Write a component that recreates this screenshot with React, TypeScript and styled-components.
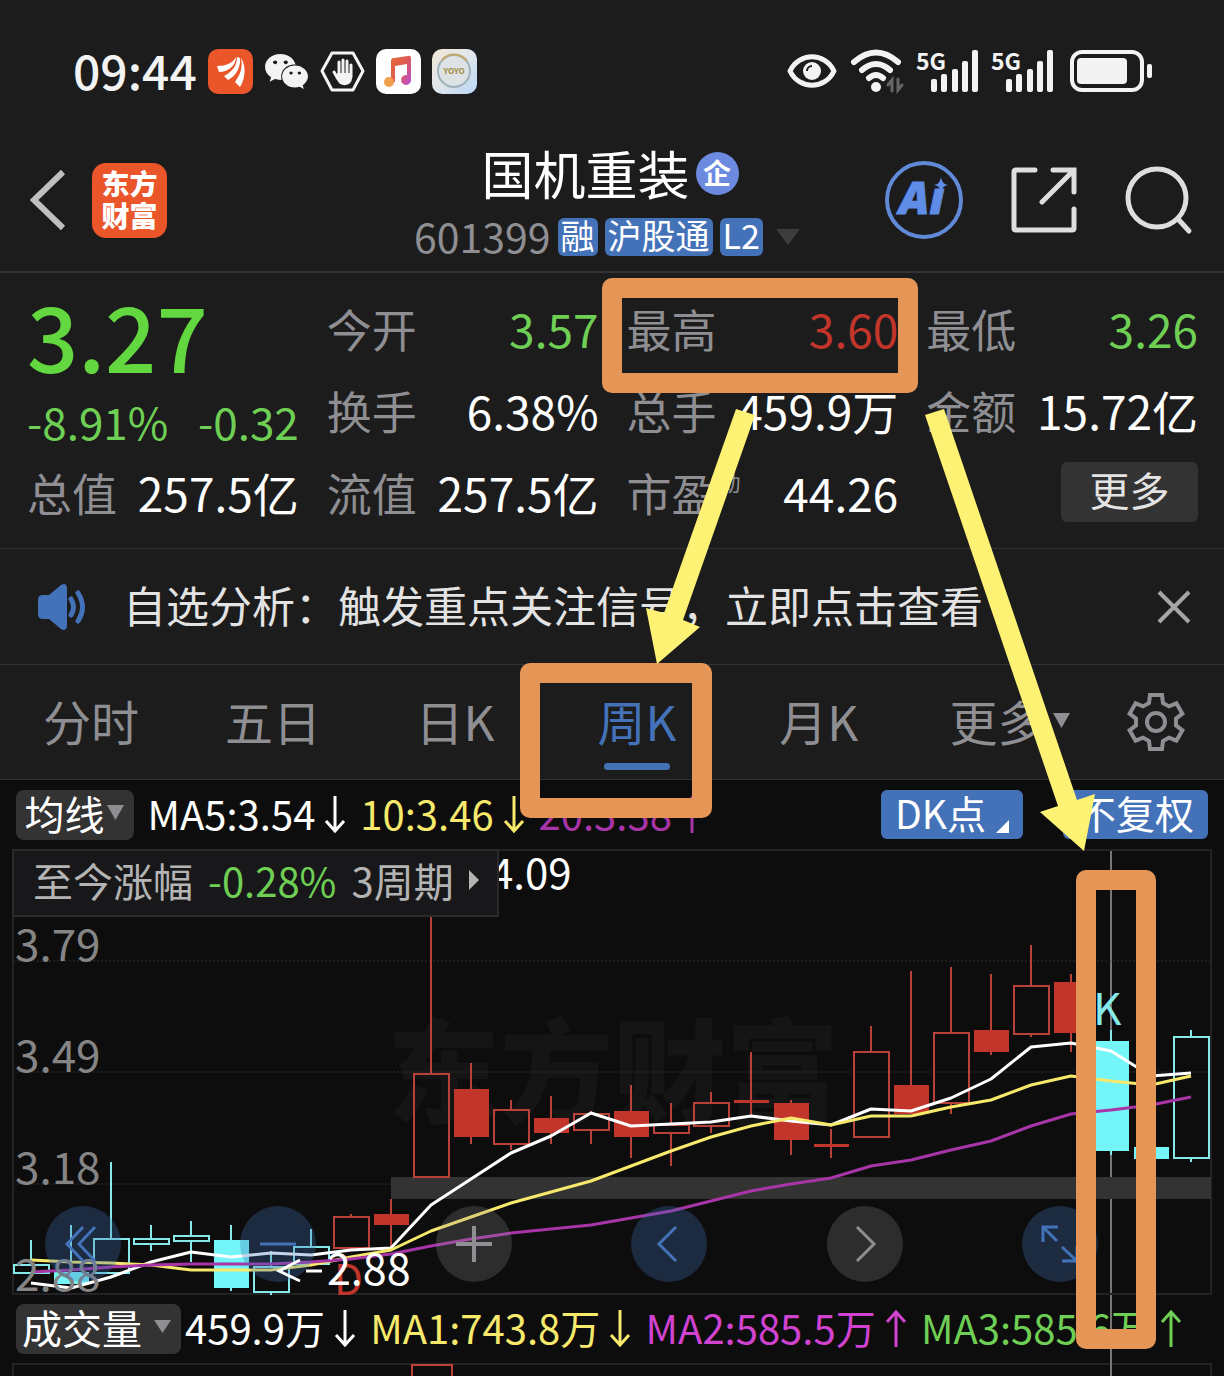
import React from 'react';
import styled, { createGlobalStyle } from 'styled-components';
import { FaWeixin } from 'react-icons/fa';

const c = {
  bg: '#1c1c1c',
  chart: '#0d0d0d',
  line: '#323234',
  grey: '#8e8e93',
  blue: '#4472b9',
  green: '#6fcf55',
  red: '#c2352b',
  redLine: '#b8423a',
  cyan: '#74f5f7',
  cyanLine: '#86eaea',
  yellow: '#f7e96b',
  purple: '#a835a8',
  magenta: '#d043d0',
};
const font = '"Noto Sans CJK SC", "Noto Sans", sans-serif';

const Global = createGlobalStyle`
  * { box-sizing: border-box; }
  body { margin: 0; background: ${c.bg}; }
  button { font: inherit; color: inherit; background: none; border: 0; padding: 0; cursor: pointer; }
  svg { display: block; flex: none; overflow: visible; }
`;

const Page = styled.div`
  position: relative;
  display: flex;
  flex-direction: column;
  min-height: 100vh;
  overflow: hidden;
  background: ${c.bg};
  color: #fff;
  font-family: ${font};
  font-weight: 400;
  line-height: 1;
  white-space: nowrap;
`;

/* ---------- status bar ---------- */
const StatusBar = styled.div`
  display: flex;
  justify-content: space-between;
  align-items: center;
  height: 142px;
  padding: 0 71px 0 73px;
`;
const Group = styled.div<{ $gap: number }>`
  display: flex;
  align-items: center;
  gap: ${(p) => p.$gap}px;
`;
const Clock = styled.time`
  padding-bottom: 4px;
  font-size: 48px;
  font-weight: 500;
  color: #f3f3f3;
`;
const AppTile = styled.div<{ $bg: string }>`
  display: flex;
  align-items: center;
  justify-content: center;
  width: 45px;
  height: 45px;
  border-radius: 10px;
  background: ${(p) => p.$bg};
  color: #f3f3f3;
`;

/* ---------- header ---------- */
const Header = styled.header`
  display: grid;
  grid-template-columns: 1fr auto 1fr;
  align-items: center;
  height: 131px;
  padding: 0 32px 28px 28px;
  border-bottom: 2px solid ${c.line};
`;
const BrandLogo = styled.div`
  width: 75px;
  height: 75px;
  padding: 4px 0;
  border-radius: 14px;
  background: #ea5529;
  font-size: 28px;
  line-height: 32px;
  font-weight: 900;
  text-align: center;
`;
const TitleBlock = styled.div`
  display: flex;
  flex-direction: column;
  align-items: center;
  gap: 16px;
  padding-top: 5px;
`;
const Title = styled.h1`
  display: flex;
  align-items: center;
  gap: 6px;
  margin: 0;
  font-size: 52px;
  font-weight: 400;
`;
const CorpBadge = styled.span`
  display: flex;
  align-items: center;
  justify-content: center;
  width: 43px;
  height: 43px;
  padding-bottom: 2px;
  border-radius: 50%;
  background: #6c8be0;
  font-size: 28px;
  font-weight: 700;
`;
const CodeRow = styled.div`
  display: flex;
  align-items: center;
  gap: 7px;
`;
const Code = styled.span`
  padding-bottom: 2px;
  font-size: 41px;
  color: ${c.grey};
`;
const Tag = styled.span`
  height: 38px;
  padding: 0 3px;
  border-radius: 6px;
  background: ${c.blue};
  font-size: 34px;
  line-height: 34px;
`;
const CodeMenu = styled.button`
  padding: 0 6px;
`;
const Actions = styled.div`
  display: flex;
  align-items: center;
  justify-content: flex-end;
  gap: 47px;
`;

/* ---------- quote ---------- */
const Quote = styled.section`
  display: grid;
  grid-template-columns: repeat(4, 1fr);
  grid-auto-rows: 82px;
  column-gap: 28px;
  padding: 14px 26px 15px 27px;
  border-bottom: 1px solid ${c.line};
`;
const PriceCell = styled.div`
  grid-row: span 2;
  display: flex;
  flex-direction: column;
  gap: 18px;
`;
const Price = styled.strong`
  font-size: 90px;
  line-height: 94px;
  font-weight: 500;
  color: #63d740;
`;
const Change = styled.div`
  display: flex;
  justify-content: space-between;
  font-size: 44px;
  color: ${c.green};
`;
const Stat = styled.div`
  display: flex;
  align-items: center;
  justify-content: space-between;
`;
const StatLabel = styled.span`
  display: flex;
  font-size: 45px;
  color: ${c.grey};
`;
const Sup = styled.sup`
  margin-left: 2px;
  font-size: 22px;
  line-height: 22px;
`;
const StatValue = styled.span<{ $color?: string }>`
  font-size: 46px;
  color: ${(p) => p.$color || '#fff'};
`;
const MoreButton = styled.button`
  justify-self: end;
  align-self: center;
  width: 137px;
  height: 60px;
  padding-bottom: 6px;
  border-radius: 6px;
  background: #333;
  color: #e4e4e4;
  font-size: 40px;
`;

/* ---------- notice ---------- */
const Notice = styled.section`
  display: flex;
  align-items: center;
  height: 116px;
  padding: 0 34px 0 36px;
  border-bottom: 1px solid ${c.line};
`;
const NoticeText = styled.p`
  flex: 1;
  margin: 0 0 0 36px;
  padding-bottom: 4px;
  font-size: 43px;
  color: #e3e3e3;
`;

/* ---------- tabs ---------- */
const Tabs = styled.nav`
  display: flex;
  align-items: center;
  height: 115px;
  padding-right: 22px;
  border-bottom: 1px solid ${c.line};
`;
const Tab = styled.button<{ $active?: boolean; $menu?: boolean }>`
  position: relative;
  flex: ${(p) => (p.$menu ? 11 : 10)} 1 0;
  display: flex;
  align-items: center;
  justify-content: center;
  gap: 8px;
  height: 100%;
  padding-bottom: 4px;
  font-size: 48px;
  color: ${(p) => (p.$active ? c.blue : c.grey)};
  &::after {
    content: '';
    display: ${(p) => (p.$active ? 'block' : 'none')};
    position: absolute;
    left: calc(50% - 33px);
    bottom: 9px;
    width: 66px;
    height: 7px;
    border-radius: 4px;
    background: ${c.blue};
  }
`;
const GearButton = styled.button`
  display: flex;
  justify-content: center;
  width: 92px;
`;

/* ---------- chart ---------- */
const ChartArea = styled.section`
  position: relative;
  flex: 1;
  display: flex;
  flex-direction: column;
  padding: 0 12px;
  background: ${c.chart};
`;
const Crosshair = styled.div`
  position: absolute;
  top: 69px;
  bottom: 0;
  right: 112px;
  width: 2px;
  background: #777;
`;
const IndicatorRow = styled.div`
  position: relative;
  display: flex;
  align-items: center;
  height: 69px;
  padding: 0 4px;
  font-size: 40px;
`;
const PickButton = styled.button<{ $gap: number }>`
  display: flex;
  align-items: center;
  gap: ${(p) => p.$gap}px;
  height: 50px;
  padding: 0 10px 4px 6px;
  border-radius: 8px;
  background: #333;
`;
const Averages = styled.div<{ $spread?: boolean }>`
  flex: 1;
  display: flex;
  gap: ${(p) => (p.$spread ? 0 : 14)}px;
  justify-content: ${(p) => (p.$spread ? 'space-between' : 'flex-start')};
  padding: ${(p) => (p.$spread ? '0 26px 4px 4px' : '0 0 4px 14px')};
`;
const Average = styled.span<{ $color: string }>`
  display: flex;
  align-items: center;
  gap: 9px;
  color: ${(p) => p.$color};
`;
const BlueButtons = styled.div`
  display: flex;
  gap: 40px;
`;
const BlueButton = styled.button`
  display: flex;
  align-items: flex-end;
  gap: 10px;
  height: 49px;
  padding: 0 14px 6px;
  border-radius: 6px;
  background: ${c.blue};
  font-size: 39px;
  line-height: 41px;
`;
const ChartBox = styled.div`
  position: relative;
`;
const ChartSvg = styled.svg`
  width: 100%;
  height: auto;
  font-family: ${font};
`;
const RangeInfo = styled.button`
  position: absolute;
  top: 0;
  left: 0;
  display: flex;
  align-items: center;
  gap: 15px;
  height: 68px;
  padding: 0 18px 6px 19px;
  border: 2px solid #2a2a2d;
  background: #18181a;
  color: #b4b4b4;
  font-size: 40px;
`;
const Rise = styled.span`
  color: ${c.green};
`;
const Controls = styled.div`
  position: absolute;
  left: 33px;
  right: 114px;
  bottom: 12px;
  display: flex;
  justify-content: space-between;
`;
const Round = styled.button<{ $blue?: boolean }>`
  display: flex;
  align-items: center;
  justify-content: center;
  width: 76px;
  height: 76px;
  border-radius: 50%;
  background: ${(p) => (p.$blue ? 'rgba(65,112,182,0.3)' : 'rgba(142,142,147,0.25)')};
  color: ${(p) => (p.$blue ? c.blue : c.grey)};
`;
const LowMark = styled.svg`
  position: absolute;
  left: 264px;
  bottom: 2px;
  font-family: ${font};
`;
const VolumeBox = styled.div`
  flex: 1;
  min-height: 13px;
  border: 2px solid #232325;
  border-bottom: 0;
`;
const VolumeSvg = styled.svg`
  width: 100%;
  height: 11px;
`;
const Overlay = styled.svg`
  position: absolute;
  top: 0;
  left: 0;
  width: 100%;
  pointer-events: none;
`;

/* ---------- small drawings ---------- */
const Triangle = ({ w, h, color }: { w: number; h: number; color: string }) => (
  <svg width={w} height={h} viewBox="0 0 10 10" preserveAspectRatio="none">
    <path d="M0 0H10L5 10Z" fill={color} />
  </svg>
);

const TrendArrow = ({ up }: { up?: boolean }) => (
  <svg width="22" height="40" viewBox="0 0 22 40" fill="none" stroke="currentColor" strokeWidth="3">
    {up ? <path d="M11 40V5M2 15L11 5L20 15" /> : <path d="M11 3V38M2 28L11 38L20 28" />}
  </svg>
);

const Signal = () => (
  <svg width="62" height="44" viewBox="0 0 62 44" fill="#f3f3f3">
    <text x="-1" y="21" fontSize="23" fontWeight="700" fontFamily={font}>5G</text>
    {[[14, 30], [24, 25], [35, 20], [45, 12], [55, 1]].map(([x, y]) => (
      <rect key={x} x={x} y={y} width="6" height={43 - y} rx="2" />
    ))}
  </svg>
);

const Gear = () => {
  const tooth = [[-7, -19], [-6, -27], [6, -27], [7, -19]];
  const pts: string[] = [];
  for (let k = 0; k < 6; k++) {
    const a = (k * Math.PI) / 3;
    tooth.forEach(([x, y]) =>
      pts.push(`${(x * Math.cos(a) - y * Math.sin(a)).toFixed(1)},${(x * Math.sin(a) + y * Math.cos(a)).toFixed(1)}`),
    );
  }
  return (
    <svg width="60" height="60" viewBox="-30 -30 60 60" fill="none" stroke={c.grey} strokeWidth="4">
      <polygon points={pts.join(' ')} />
      <circle r="9" />
    </svg>
  );
};

/* ---------- chart data ---------- */
type Candle = [kind: 'solid' | 'hollow', colour: 'r' | 'c', high: number, top: number, bottom: number, low: number];
const candles: Candle[] = [
  ['hollow', 'c', 1240, 1265, 1273, 1273],
  ['solid', 'c', 1225, 1272, 1284, 1284],
  ['hollow', 'c', 1162, 1239, 1273, 1273],
  ['hollow', 'c', 1225, 1239, 1244, 1251],
  ['hollow', 'c', 1221, 1236, 1241, 1262],
  ['solid', 'c', 1225, 1240, 1288, 1291],
  ['hollow', 'c', 1251, 1267, 1292, 1295],
  ['hollow', 'c', 1229, 1247, 1264, 1264],
  ['hollow', 'r', 1214, 1217, 1248, 1248],
  ['solid', 'r', 1199, 1214, 1225, 1248],
  ['hollow', 'r', 850, 1074, 1177, 1177],
  ['solid', 'r', 1063, 1089, 1137, 1144],
  ['hollow', 'r', 1100, 1110, 1144, 1150],
  ['solid', 'r', 1096, 1118, 1133, 1144],
  ['hollow', 'r', 1111, 1114, 1130, 1144],
  ['solid', 'r', 1085, 1111, 1137, 1158],
  ['hollow', 'r', 1103, 1125, 1133, 1166],
  ['hollow', 'r', 1092, 1103, 1126, 1133],
  ['solid', 'r', 1052, 1100, 1103, 1117],
  ['solid', 'r', 1100, 1103, 1140, 1155],
  ['solid', 'r', 1129, 1144, 1147, 1158],
  ['hollow', 'r', 1026, 1052, 1137, 1137],
  ['solid', 'r', 971, 1085, 1114, 1114],
  ['hollow', 'r', 967, 1033, 1103, 1114],
  ['solid', 'r', 974, 1030, 1052, 1055],
  ['hollow', 'r', 945, 986, 1034, 1037],
  ['solid', 'r', 974, 982, 1033, 1052],
  ['solid', 'c', 1030, 1041, 1151, 1155],
  ['solid', 'c', 1147, 1147, 1159, 1159],
  ['hollow', 'c', 1030, 1037, 1158, 1162],
];
const ma5 = [1283, 1288, 1277, 1262, 1252, 1257, 1253, 1255, 1250, 1248, 1205, 1179, 1153, 1136, 1113, 1126, 1124, 1122, 1116, 1121, 1125, 1109, 1111, 1098, 1079, 1047, 1043, 1051, 1076, 1073];
const ma10 = [1260, 1262, 1263, 1265, 1270, 1270, 1270, 1265, 1257, 1250, 1231, 1217, 1203, 1192, 1181, 1166, 1151, 1137, 1126, 1118, 1125, 1116, 1116, 1107, 1100, 1085, 1076, 1081, 1085, 1076];
const ma20 = [1272, 1270, 1267, 1265, 1264, 1264, 1264, 1262, 1259, 1254, 1246, 1239, 1233, 1229, 1225, 1218, 1211, 1201, 1191, 1184, 1178, 1166, 1160, 1150, 1141, 1126, 1114, 1110, 1105, 1097];
const cx = (i: number) => 31 + i * 40;
const toPoints = (ys: number[]) => ys.map((y, i) => `${cx(i)},${y}`).join(' ');

const KLine = () => (
  <ChartSvg viewBox="12 849 1200 445" role="img" aria-label="周K线图">
    <text x="387" y="1114" fontSize="113" fontWeight="900" fill="#151515">东方财富</text>
    {[961, 1072, 1184].map((y) => (
      <path key={y} d={`M13 ${y}H1211`} stroke="#303030" strokeWidth="1" strokeDasharray="2 2" />
    ))}
    <rect x="13" y="850" width="1198" height="444" fill="none" stroke="#232325" strokeWidth="2" />
    <rect x="391" y="1177" width="820" height="22" fill="#333" />
    {candles.map(([kind, colour, high, top, bottom, low], i) => {
      const x = cx(i);
      const line = colour === 'r' ? c.redLine : c.cyanLine;
      return (
        <g key={x} stroke={line} strokeWidth="2">
          <path d={`M${x} ${high}V${top}M${x} ${bottom}V${low}`} />
          {kind === 'hollow' ? (
            <rect x={x - 17} y={top} width="35" height={bottom - top} fill="none" />
          ) : (
            <rect x={x - 17} y={top} width="35" height={bottom - top} fill={colour === 'r' ? c.red : c.cyan} stroke="none" />
          )}
        </g>
      );
    })}
    <g fill="none" strokeWidth="3" strokeLinejoin="round">
      <polyline points={toPoints(ma5)} stroke="#fff" />
      <polyline points={toPoints(ma10)} stroke={c.yellow} />
      <polyline points={toPoints(ma20)} stroke={c.purple} />
    </g>
    <text x="334" y="1295" fontSize="42" fill={c.red}>D</text>
    <text x="1093" y="1025" fontSize="44" fill={c.cyanLine}>K</text>
    <g fontSize="44" fill="#858585">
      <text x="15" y="961">3.79</text>
      <text x="15" y="1072">3.49</text>
      <text x="15" y="1184">3.18</text>
      <text x="15" y="1291">2.88</text>
    </g>
    <text x="490" y="889" fontSize="42" fill="#fff">4.09</text>
  </ChartSvg>
);

const App = () => (
  <Page>
    <Global />
    <StatusBar>
      <Group $gap={11}>
        <Clock>09:44</Clock>
        <AppTile $bg="#ea5529">
          <svg width="45" height="45" viewBox="0 0 45 45" fill="#fff">
            <path d="M9 17C18 17 25 14 28 8C28 16 21 23 11 23Z" />
            <path d="M16 27C24 23 29 17 29 8L32 9C33 18 28 27 20 31Z" />
            <path d="M27 33C32 26 35 19 33 9C38 16 38 29 32 38Z" />
          </svg>
        </AppTile>
        <AppTile $bg="transparent"><FaWeixin size={45} /></AppTile>
        <AppTile $bg="transparent">
          <svg width="45" height="45" viewBox="0 0 45 45" fill="none" stroke="#f3f3f3" strokeWidth="3" strokeLinecap="round" strokeLinejoin="round">
            <path d="M12 4H33L43 22L33 41H12L2 22Z" />
            <path d="M19 13V26M23 11V26M27 12V26M31 16V28M14 23L18 30" strokeWidth="3" />
            <path d="M18 25H31V29C31 37 20 37 18 30Z" fill="#f3f3f3" strokeWidth="2" />
          </svg>
        </AppTile>
        <AppTile $bg="#fff">
          <svg width="45" height="45" viewBox="0 0 45 45">
            <defs>
              <linearGradient id="note" x1="0" y1="0.3" x2="1" y2="1">
                <stop offset="0" stopColor="#e2663c" />
                <stop offset="0.5" stopColor="#de5a58" />
                <stop offset="1" stopColor="#b44be8" />
              </linearGradient>
            </defs>
            <path d="M15 12Q15 9 18 9L32 7Q35 6 35 9V30A5 5 0 1 1 31 26V15L19 17V33H15Z" fill="url(#note)" />
            <circle cx="13" cy="33" r="5" fill="#f0a04c" />
          </svg>
        </AppTile>
        <AppTile $bg="linear-gradient(135deg,#f2e7d6,#dfe6ec 50%,#b9d6f5)">
          <svg width="45" height="45" viewBox="0 0 45 45">
            <circle cx="22" cy="22" r="16" fill="#dde3e4" stroke="#9fb3bb" strokeWidth="2" />
            <path d="M10 11A16 16 0 0 1 35 12" fill="none" stroke="#c2a869" strokeWidth="2" />
            <text x="22" y="25" fontSize="8" fontWeight="700" textAnchor="middle" fill="#a08a3c" fontFamily={font}>YOYO</text>
          </svg>
        </AppTile>
      </Group>
      <Group $gap={13}>
        <svg width="50" height="36" viewBox="0 0 50 36" fill="none" stroke="#f3f3f3" strokeWidth="5">
          <path d="M3 18C12 -1 38 -1 47 18C38 37 12 37 3 18Z" strokeLinejoin="round" />
          <circle cx="25" cy="18" r="9" fill="#f3f3f3" stroke="none" />
          <path d="M20 18A5 5 0 0 1 25 13" stroke={c.bg} strokeWidth="2" />
        </svg>
        <svg width="54" height="44" viewBox="0 0 54 44" fill="none" stroke="#f3f3f3" strokeWidth="6" strokeLinecap="round">
          <path d="M4 13Q26 -6 48 13M12 21Q26 9 40 21M19 29Q26 23 33 29" />
          <circle cx="26" cy="38" r="5" fill="#f3f3f3" stroke="none" />
          <path d="M42 42V31L38 36M48 30V41L52 36" stroke="#666" strokeWidth="3" />
        </svg>
        <Signal />
        <Signal />
        <svg width="86" height="44" viewBox="0 0 86 44" fill="#f3f3f3">
          <rect x="5" y="3" width="70" height="38" rx="10" fill="none" stroke="#f3f3f3" strokeWidth="4" />
          <rect x="10" y="9" width="50" height="26" rx="4" />
          <rect x="80" y="15" width="5" height="14" rx="2" />
        </svg>
      </Group>
    </StatusBar>

    <Header>
      <Group $gap={26}>
        <button aria-label="返回">
          <svg width="38" height="62" viewBox="0 0 38 62" fill="none" stroke="#bfbfbf" strokeWidth="6">
            <path d="M35 3L6 31L35 59" />
          </svg>
        </button>
        <BrandLogo>东方<br />财富</BrandLogo>
      </Group>
      <TitleBlock>
        <Title>国机重装<CorpBadge>企</CorpBadge></Title>
        <CodeRow>
          <Code>601399</Code>
          <Tag>融</Tag>
          <Tag>沪股通</Tag>
          <Tag>L2</Tag>
          <CodeMenu aria-label="切换股票"><Triangle w={24} h={16} color="#3d3d3d" /></CodeMenu>
        </CodeRow>
      </TitleBlock>
      <Actions>
        <button aria-label="Ai">
          <svg width="80" height="80" viewBox="0 0 80 80">
            <circle cx="40" cy="40" r="37" fill="none" stroke="#6089d6" strokeWidth="4" />
            <text x="15" y="54" fontSize="45" fontWeight="800" fontStyle="italic" fill="#5f8ce6" stroke="#5f8ce6" strokeWidth="1" fontFamily='"Open Sans", sans-serif'>Aı</text>
            <path d="M57 17Q58 24 64 25Q58 26 57 32Q56 26 50 25Q56 24 57 17Z" fill="#5f8ce6" />
          </svg>
        </button>
        <button aria-label="分享">
          <svg width="66" height="66" viewBox="0 0 66 66" fill="none" stroke="#dedede" strokeWidth="5" strokeLinecap="round">
            <path d="M24 3H5Q3 3 3 5V61Q3 63 5 63H61Q63 63 63 61V42M42 3H63V25M62 4L31 35" />
          </svg>
        </button>
        <button aria-label="搜索">
          <svg width="68" height="68" viewBox="0 0 68 68" fill="none" stroke="#dedede" strokeWidth="5" strokeLinecap="round">
            <circle cx="33" cy="32" r="29" />
            <path d="M54 53L65 65" />
          </svg>
        </button>
      </Actions>
    </Header>

    <Quote>
      <PriceCell>
        <Price>3.27</Price>
        <Change><span>-8.91%</span><span>-0.32</span></Change>
      </PriceCell>
      <Stat><StatLabel>今开</StatLabel><StatValue $color={c.green}>3.57</StatValue></Stat>
      <Stat><StatLabel>最高</StatLabel><StatValue $color={c.red}>3.60</StatValue></Stat>
      <Stat><StatLabel>最低</StatLabel><StatValue $color={c.green}>3.26</StatValue></Stat>
      <Stat><StatLabel>换手</StatLabel><StatValue>6.38%</StatValue></Stat>
      <Stat><StatLabel>总手</StatLabel><StatValue>459.9万</StatValue></Stat>
      <Stat><StatLabel>金额</StatLabel><StatValue>15.72亿</StatValue></Stat>
      <Stat><StatLabel>总值</StatLabel><StatValue>257.5亿</StatValue></Stat>
      <Stat><StatLabel>流值</StatLabel><StatValue>257.5亿</StatValue></Stat>
      <Stat><StatLabel>市盈<Sup>动</Sup></StatLabel><StatValue>44.26</StatValue></Stat>
      <MoreButton>更多</MoreButton>
    </Quote>

    <Notice>
      <svg width="51" height="48" viewBox="0 0 51 48" fill={c.blue}>
        <path d="M2 17Q2 12 7 12H13L25 2Q31 -1 31 6V42Q31 49 25 46L13 36H7Q2 36 2 31Z" />
        <path d="M35 16Q40 24 35 32M42 10Q51 24 42 38" fill="none" stroke={c.blue} strokeWidth="5" strokeLinecap="round" />
      </svg>
      <NoticeText>自选分析：触发重点关注信号，立即点击查看</NoticeText>
      <button aria-label="关闭">
        <svg width="32" height="32" viewBox="0 0 32 32" stroke="#a5a5a5" strokeWidth="4"><path d="M1 1L31 31M31 1L1 31" /></svg>
      </button>
    </Notice>

    <Tabs>
      <Tab>分时</Tab>
      <Tab>五日</Tab>
      <Tab>日K</Tab>
      <Tab $active>周K</Tab>
      <Tab>月K</Tab>
      <Tab $menu>更多<Triangle w={17} h={15} color={c.grey} /></Tab>
      <GearButton aria-label="设置"><Gear /></GearButton>
    </Tabs>

    <ChartArea>
      <Crosshair />
      <IndicatorRow>
        <PickButton $gap={2}>&#8202;均线<Triangle w={17} h={15} color={c.grey} /></PickButton>
        <Averages>
          <Average $color="#fff">MA5:3.54<TrendArrow /></Average>
          <Average $color={c.yellow}>10:3.46<TrendArrow /></Average>
          <Average $color={c.purple}>20:3.38<TrendArrow up /></Average>
        </Averages>
        <BlueButtons>
          <BlueButton>DK点<svg width="13" height="13" viewBox="0 0 13 13"><path d="M13 0V13H0Z" fill="#fff" /></svg></BlueButton>
          <BlueButton>不复权</BlueButton>
        </BlueButtons>
      </IndicatorRow>

      <ChartBox>
        <KLine />
        <RangeInfo>
          <span>至今涨幅</span>
          <Rise>-0.28%</Rise>
          <span>3周期</span>
          <svg width="10" height="20" viewBox="0 0 10 20"><path d="M0 0L10 10L0 20Z" fill="#b4b4b4" /></svg>
        </RangeInfo>
        <Controls>
          <Round $blue aria-label="最早">
            <svg width="36" height="36" viewBox="0 0 36 36" fill="none" stroke="currentColor" strokeWidth="3"><path d="M18 1L2 18L18 35M30 1L14 18L30 35" /></svg>
          </Round>
          <Round $blue aria-label="缩小">
            <svg width="36" height="4" viewBox="0 0 36 4"><path d="M0 2H36" stroke="currentColor" strokeWidth="3" /></svg>
          </Round>
          <Round aria-label="放大">
            <svg width="36" height="36" viewBox="0 0 36 36"><path d="M0 18H36M18 0V36" stroke="currentColor" strokeWidth="4" /></svg>
          </Round>
          <Round $blue aria-label="前移">
            <svg width="24" height="36" viewBox="0 0 24 36" fill="none" stroke="currentColor" strokeWidth="3"><path d="M19 1L2 18L19 35" /></svg>
          </Round>
          <Round aria-label="后移">
            <svg width="22" height="36" viewBox="0 0 22 36" fill="none" stroke="currentColor" strokeWidth="3"><path d="M3 1L20 18L3 35" /></svg>
          </Round>
          <Round $blue aria-label="全屏">
            <svg width="38" height="38" viewBox="0 0 38 38" fill="none" stroke="currentColor" strokeWidth="3"><path d="M17 2H2V17M2 2L16 16M36 21V36H21M36 36L21 22" /></svg>
          </Round>
        </Controls>
        <LowMark width="150" height="40" viewBox="276 1252 150 40">
          <path d="M300 1260L279 1271L300 1281M306 1271H322" fill="none" stroke="#fff" strokeWidth="3" />
          <text x="327" y="1285" fontSize="43" fill="#fff">2.88</text>
        </LowMark>
      </ChartBox>

      <IndicatorRow>
        <PickButton $gap={12}>成交量<Triangle w={17} h={13} color={c.grey} /></PickButton>
        <Averages $spread>
          <Average $color="#fff">459.9万<TrendArrow /></Average>
          <Average $color={c.yellow}>MA1:743.8万<TrendArrow /></Average>
          <Average $color={c.magenta}>MA2:585.5万<TrendArrow up /></Average>
          <Average $color={c.green}>MA3:585.6万<TrendArrow up /></Average>
        </Averages>
      </IndicatorRow>
      <VolumeBox>
        <VolumeSvg viewBox="14 1365 1196 11" preserveAspectRatio="none">
          <path d="M412 1380V1365H452V1380" fill="none" stroke={c.redLine} strokeWidth="2" />
        </VolumeSvg>
      </VolumeBox>
    </ChartArea>

    <Overlay viewBox="0 0 1224 1376">
      <g fill="none" stroke="#e59657" strokeWidth="20" strokeLinejoin="round">
        <rect x="612" y="288" width="296" height="95" />
        <rect x="530" y="673" width="172" height="135" />
        <rect x="1086" y="880" width="60" height="459" />
      </g>
      <g fill="#fdf274">
        <path d="M736 409L755 415L683 620L700 627L657 664L646 608L664 613Z" />
        <path d="M925 415L944 409L1077 800L1095 794L1084 851L1040 812L1058 806Z" />
      </g>
    </Overlay>
  </Page>
);

export default App;
